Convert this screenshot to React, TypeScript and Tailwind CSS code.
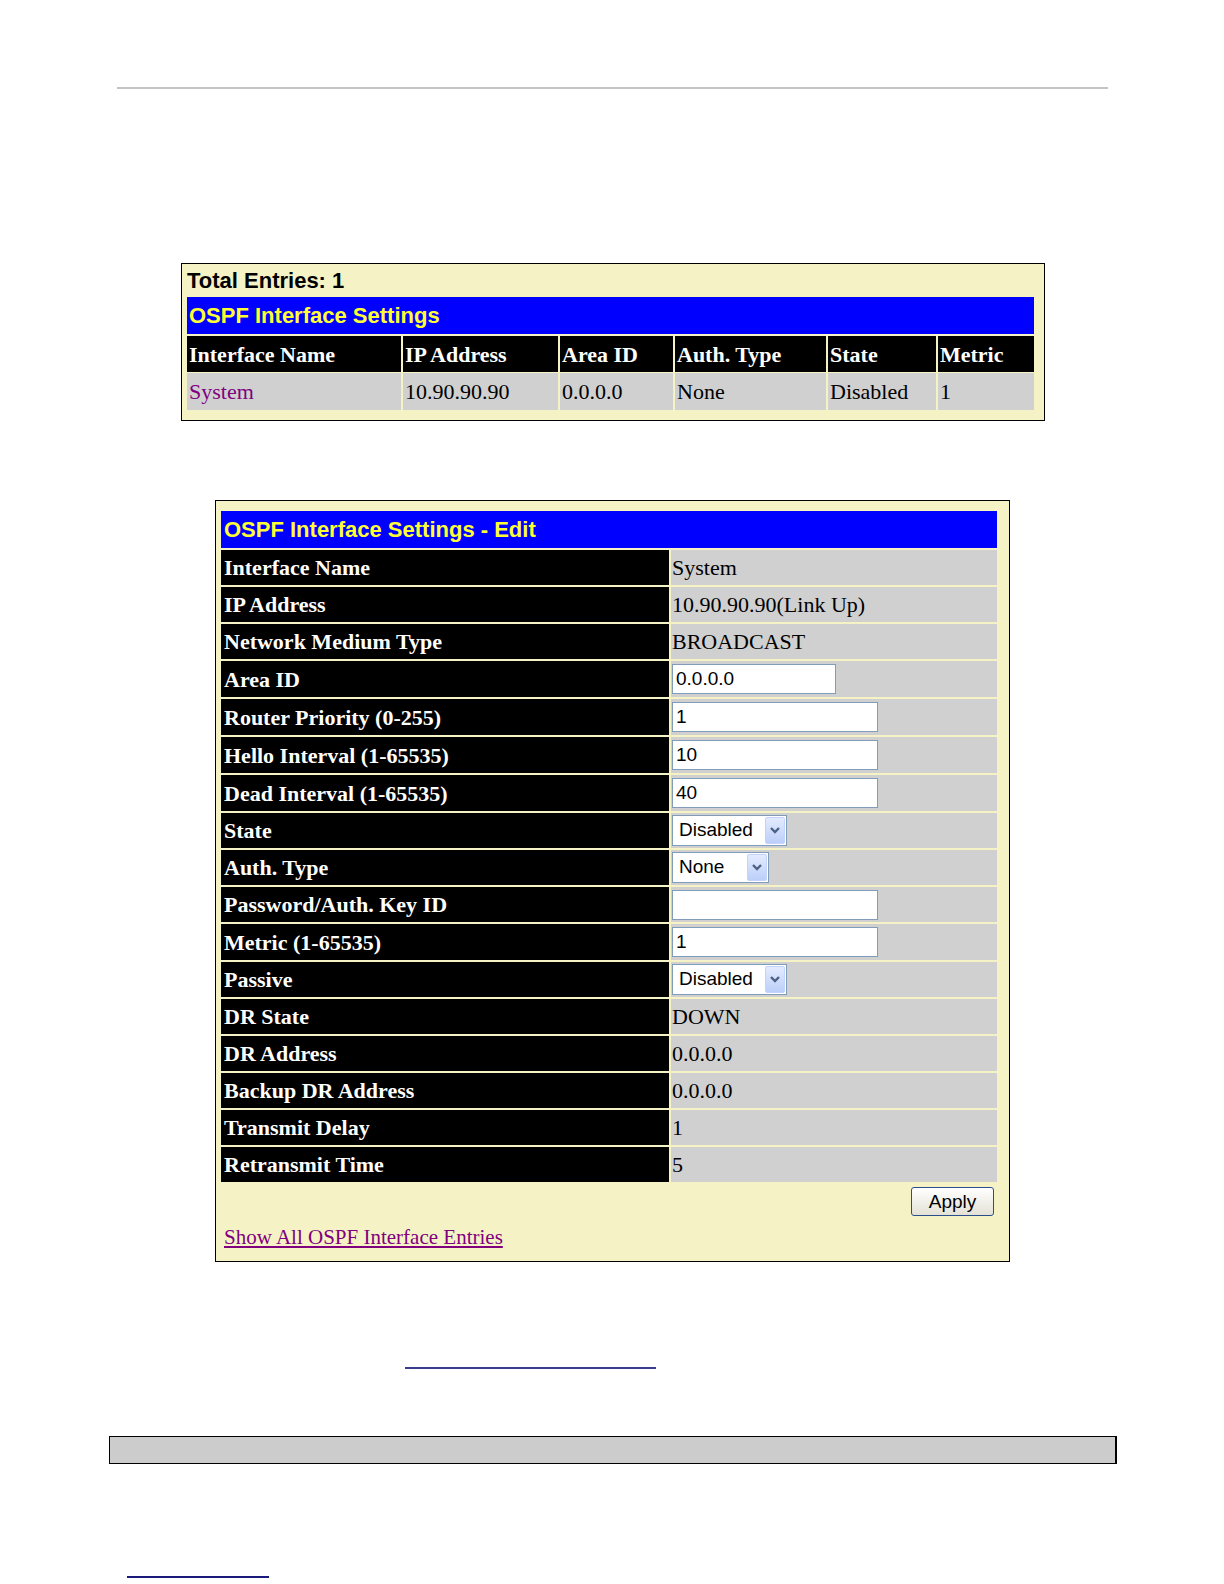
import React from "react";

const serif = { fontFamily: '"Liberation Serif", "Times New Roman", serif' };
const sans = { fontFamily: '"Liberation Sans", Arial, sans-serif' };

const cols = [
  { w: "w-[214px]", label: "Interface Name", value: "System", link: true },
  { w: "w-[155px]", label: "IP Address", value: "10.90.90.90" },
  { w: "w-[113px]", label: "Area ID", value: "0.0.0.0" },
  { w: "w-[151px]", label: "Auth. Type", value: "None" },
  { w: "w-[108px]", label: "State", value: "Disabled" },
  { w: "w-[96px]", label: "Metric", value: "1" },
];

type Field =
  | { kind: "text"; label: string; value: string }
  | { kind: "input"; label: string; value: string; short?: boolean }
  | { kind: "select"; label: string; value: string; w: string };

const fields: Field[] = [
  { kind: "text", label: "Interface Name", value: "System" },
  { kind: "text", label: "IP Address", value: "10.90.90.90(Link Up)" },
  { kind: "text", label: "Network Medium Type", value: "BROADCAST" },
  { kind: "input", label: "Area ID", value: "0.0.0.0", short: true },
  { kind: "input", label: "Router Priority (0-255)", value: "1" },
  { kind: "input", label: "Hello Interval (1-65535)", value: "10" },
  { kind: "input", label: "Dead Interval (1-65535)", value: "40" },
  { kind: "select", label: "State", value: "Disabled", w: "w-[115px]" },
  { kind: "select", label: "Auth. Type", value: "None", w: "w-[97px]" },
  { kind: "input", label: "Password/Auth. Key ID", value: "" },
  { kind: "input", label: "Metric (1-65535)", value: "1" },
  { kind: "select", label: "Passive", value: "Disabled", w: "w-[115px]" },
  { kind: "text", label: "DR State", value: "DOWN" },
  { kind: "text", label: "DR Address", value: "0.0.0.0" },
  { kind: "text", label: "Backup DR Address", value: "0.0.0.0" },
  { kind: "text", label: "Transmit Delay", value: "1" },
  { kind: "text", label: "Retransmit Time", value: "5" },
];

function TextBox({ value, short }: { value: string; short?: boolean }) {
  return (
    <div
      className={`${short ? "w-[164px]" : "w-[206px]"} h-[30px] bg-white border border-[#7f9db9] flex items-center pl-[3px] text-[19px] text-black`}
      style={sans}
    >
      {value}
    </div>
  );
}

function Select({ value, w }: { value: string; w: string }) {
  return (
    <div
      className={`${w} h-[31px] bg-white border border-[#7f9db9] flex items-center justify-between pl-[6px] pr-[1px]`}
      style={sans}
    >
      <span className="text-[19px] text-black">{value}</span>
      <span className="w-[20px] h-[27px] rounded-[2px] border border-[#c3d3fd] bg-gradient-to-b from-[#e3ebfe] to-[#bccff9] flex items-center justify-center">
        <svg width="12" height="9" viewBox="0 0 12 9">
          <path d="M2 2 L6 6 L10 2" fill="none" stroke="#4d6185" strokeWidth="2.4" />
        </svg>
      </span>
    </div>
  );
}

export default function App() {
  return (
    <div className="w-[1224px] h-[1584px] bg-white overflow-hidden">
      <div className="h-[87px]" />
      <div className="ml-[117px] w-[991px] h-[2px] bg-[#c4c4c4]" />

      {/* list panel */}
      <div className="mt-[174px] ml-[181px] w-[864px] h-[158px] border border-black bg-[#f5f3c6] pl-[5px] pt-[1px]">
        <div className="h-[32px] leading-[32px] text-[22px] font-bold text-black" style={sans}>
          Total Entries: 1
        </div>
        <div
          className="w-[847px] h-[37px] bg-[#0000ff] text-[#ffff33] text-[22px] font-bold flex items-center pl-[2px]"
          style={sans}
        >
          OSPF Interface Settings
        </div>
        <div className="flex gap-[2px] mt-[2px]" style={serif}>
          {cols.map((c) => (
            <div key={c.label} className={`${c.w} h-[36px] bg-black text-white font-bold text-[22px] flex items-center pl-[2px]`}>
              {c.label}
            </div>
          ))}
        </div>
        <div className="flex gap-[2px] mt-[1px]" style={serif}>
          {cols.map((c) => (
            <div
              key={c.label}
              className={`${c.w} h-[37px] bg-[#d0d0d0] text-[22px] flex items-center pl-[2px] ${c.link ? "text-[#800080]" : "text-black"}`}
            >
              {c.value}
            </div>
          ))}
        </div>
      </div>

      {/* edit panel */}
      <div className="mt-[79px] ml-[215px] w-[795px] h-[762px] border border-black bg-[#f5f3c6] pl-[5px] pt-[10px]">
        <div
          className="w-[776px] h-[37px] bg-[#0000ff] text-[#ffff33] text-[22px] font-bold flex items-center pl-[3px]"
          style={sans}
        >
          OSPF Interface Settings - Edit
        </div>
        <div className="flex flex-col gap-[2px] mt-[2px] w-[776px]" style={serif}>
          {fields.map((f) => {
            const h = f.kind === "input" && f.label !== "Password/Auth. Key ID" ? "h-[36px]" : "h-[35px]";
            return (
              <div key={f.label} className={`flex gap-[2px] ${h}`}>
                <div className="w-[448px] bg-black text-white font-bold text-[22px] flex items-center pl-[3px]">
                  {f.label}
                </div>
                <div className="w-[326px] bg-[#d0d0d0] text-black text-[22px] flex items-center pl-[1px]">
                  {f.kind === "text" && f.value}
                  {f.kind === "input" && <TextBox value={f.value} short={f.short} />}
                  {f.kind === "select" && <Select value={f.value} w={f.w} />}
                </div>
              </div>
            );
          })}
        </div>
        <div className="w-[776px] flex justify-end pr-[3px] mt-[5px]">
          <button
            className="w-[83px] h-[29px] rounded-[3px] border border-[#2b4f8c] bg-gradient-to-b from-white to-[#e4e2d6] text-[19px] text-black leading-none"
            style={sans}
          >
            Apply
          </button>
        </div>
        <div className="mt-[6px] pl-[3px]">
          <span className="text-[21px] text-[#800080] underline" style={serif}>
            Show All OSPF Interface Entries
          </span>
        </div>
      </div>

      <div className="mt-[105px] ml-[405px] w-[251px] h-[2px] bg-[#3b3b8f]" />
      <div className="mt-[67px] ml-[109px] w-[1008px] h-[28px] bg-[#cccccc] border border-black border-r-2" />
      <div className="mt-[112px] ml-[127px] w-[142px] h-[2px] bg-[#1a1a7a]" />
    </div>
  );
}
